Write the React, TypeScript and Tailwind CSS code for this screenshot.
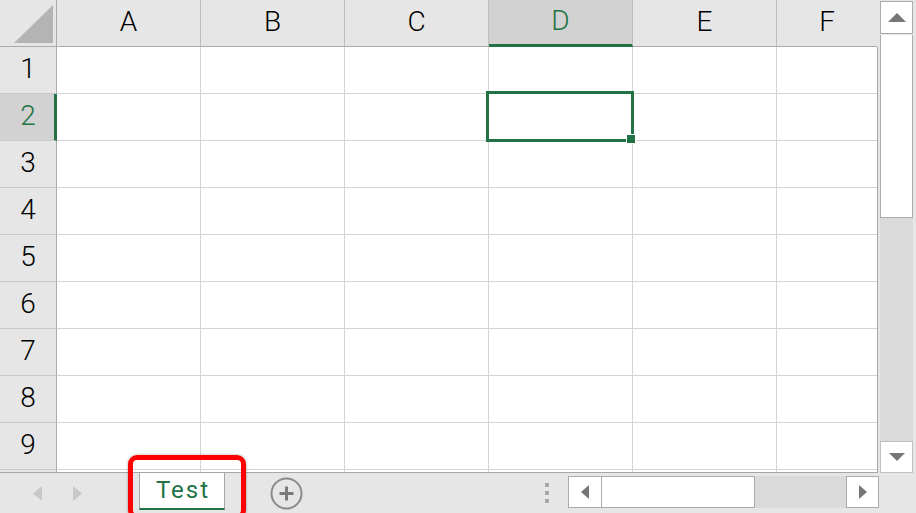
import React from "react";

const COLS = ["A", "B", "C", "D", "E", "F"];
const ROWS = [1, 2, 3, 4, 5, 6, 7, 8, 9, 10];

function HeaderRow() {
  return (
    <div className="flex h-[47px] w-[880px] bg-[#e6e6e6]">
      <div className="relative w-[57px] h-[47px] shrink-0 border-r border-b border-[#ababab]">
        <svg className="absolute left-[14px] top-[5px]" width="39" height="38" viewBox="0 0 39 38">
          <polygon points="0,38 39,38 39,0" fill="#b4b4b4" />
        </svg>
      </div>
      {COLS.map((c, i) => {
        const sel = c === "D";
        const last = i === COLS.length - 1;
        return (
          <div
            key={c}
            className={
              (last ? "w-[100px] " : "w-[144px] border-r border-r-[#bdbdbd] ") +
              "h-[47px] shrink-0 flex items-center justify-center text-[28px] font-light leading-none pb-[2px] " +
              (sel
                ? "bg-[#d2d2d2] border-b-[3px] border-b-[#217346] text-[#217346]"
                : "border-b border-b-[#ababab] text-black")
            }
          >
            {c}
          </div>
        );
      })}
    </div>
  );
}

function BodyRow({ r }: { r: number }) {
  const sel = r === 2;
  return (
    <div className="flex h-[47px] shrink-0">
      <div
        className={
          "w-[57px] h-[47px] shrink-0 flex items-center justify-center text-[28px] font-light leading-none pb-[3px] border-b border-b-[#c8c8c8] " +
          (sel
            ? "bg-[#d2d2d2] text-[#217346] border-r-[3px] border-r-[#217346] pl-[2px]"
            : "bg-[#e6e6e6] text-black border-r border-r-[#ababab]")
        }
      >
        {r < 10 ? r : ""}
      </div>
      {COLS.map((c, i) => {
        const last = i === COLS.length - 1;
        const active = sel && c === "D";
        return (
          <div
            key={c}
            className={
              (last ? "w-[100px] " : "w-[144px] border-r border-r-[#d4d4d4] ") +
              "relative h-[47px] shrink-0 bg-white border-b border-b-[#d4d4d4]"
            }
          >
            {active && (
              <div className="absolute top-[-3px] left-[-3px] right-[-2px] bottom-[-2px] border-[3px] border-[#217346] z-10">
                <div className="absolute right-[-5px] bottom-[-5px] w-[10px] h-[10px] bg-[#217346] border border-white" />
              </div>
            )}
          </div>
        );
      })}
    </div>
  );
}

function VScroll() {
  return (
    <div className="w-[38px] h-[473px] bg-[#e6e6e6] pl-[2px] pr-[3px] pt-[1px] flex flex-col">
      <div className="h-[33px] bg-white border border-[#ababab] flex items-center justify-center">
        <svg width="18" height="9" viewBox="0 0 18 9">
          <polygon points="0,9 18,9 9,0" fill="#767676" />
        </svg>
      </div>
      <div className="h-[183px] bg-white border border-[#ababab] border-t-0 mt-[1px]" />
      <div className="flex-1 bg-[#dadada]" />
      <div className="h-[32px] bg-white border border-[#c0c0c0] flex items-center justify-center">
        <svg width="16" height="8" viewBox="0 0 16 8">
          <polygon points="0,0 16,0 8,8" fill="#767676" />
        </svg>
      </div>
    </div>
  );
}

function BottomBar() {
  return (
    <div className="flex h-[40px] items-start bg-[#e6e6e6]">
      <div className="w-[139px] h-[40px] flex items-center pl-[33px] gap-[31px] pt-[1px]">
        <svg width="9" height="15" viewBox="0 0 9 15">
          <polygon points="9,0 9,15 0,7.5" fill="#c8c8c8" />
        </svg>
        <svg width="9" height="15" viewBox="0 0 9 15">
          <polygon points="0,0 0,15 9,7.5" fill="#c8c8c8" />
        </svg>
      </div>
      <div className="w-[86px] h-[37px] bg-white border-x border-[#a6a6a6] border-b-2 border-b-[#217346] flex items-center justify-center text-[24px] tracking-[2px] leading-none text-[#217346] pb-[2px] pl-[2px]">
        Test
      </div>
      <div className="ml-[45px] h-[40px] flex items-center">
        <svg width="33" height="33" viewBox="0 0 33 33">
          <circle cx="16.5" cy="16.5" r="15" fill="none" stroke="#8a8a8a" strokeWidth="2" />
          <rect x="9.5" y="15" width="14" height="3" fill="#7a7a7a" />
          <rect x="15" y="9.5" width="3" height="14" fill="#7a7a7a" />
        </svg>
      </div>
      <div className="ml-[242px] h-[40px] flex flex-col justify-center gap-[4px] pb-[1px]">
        <div className="w-[4px] h-[4px] bg-[#a8a8a8]" />
        <div className="w-[4px] h-[4px] bg-[#a8a8a8]" />
        <div className="w-[4px] h-[4px] bg-[#a8a8a8]" />
      </div>
      <div className="ml-[19px] mt-[3px] w-[311px] h-[32px] flex">
        <div className="w-[34px] h-[32px] bg-white border border-[#ababab] flex items-center justify-center">
          <svg width="8" height="14" viewBox="0 0 8 14">
            <polygon points="8,0 8,14 0,7" fill="#767676" />
          </svg>
        </div>
        <div className="w-[153px] h-[32px] bg-white border border-[#ababab] border-l-0" />
        <div className="flex-1 h-[32px] bg-[#dadada]" />
        <div className="w-[33px] h-[32px] bg-white border border-[#ababab] flex items-center justify-center">
          <svg width="8" height="14" viewBox="0 0 8 14">
            <polygon points="0,0 0,14 8,7" fill="#767676" />
          </svg>
        </div>
      </div>
    </div>
  );
}

export default function App() {
  return (
    <div className="relative w-[916px] h-[513px] overflow-hidden bg-[#e6e6e6] font-['Roboto','Noto_Sans_CJK_JP',sans-serif]">
      <div className="flex h-[473px]">
        <div className="w-[878px] h-[473px] flex flex-col overflow-hidden">
          <HeaderRow />
          <div className="w-[878px] h-[426px] flex flex-col overflow-hidden border-r border-b border-[#a6a6a6] bg-white">
            {ROWS.map((r) => (
              <BodyRow key={r} r={r} />
            ))}
          </div>
        </div>
        <VScroll />
      </div>
      <BottomBar />
      <div className="absolute left-[128px] top-[455px] w-[118px] h-[64px] border-[5px] border-[#ff0000] rounded-[9px] pointer-events-none shadow-[0_0_3px_rgba(0,0,0,0.35)]" />
    </div>
  );
}
